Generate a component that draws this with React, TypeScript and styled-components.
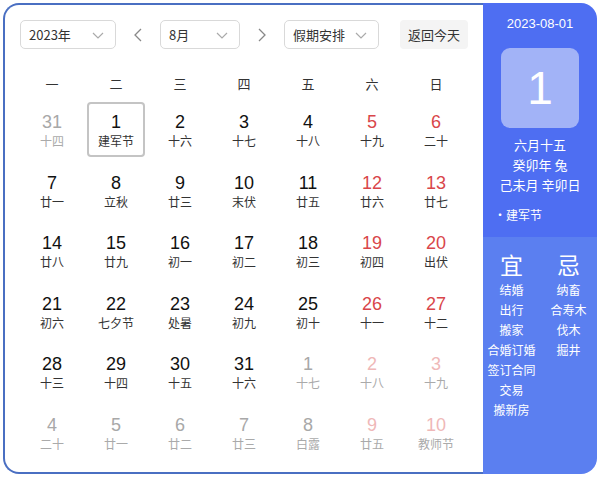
import styled, { createGlobalStyle } from 'styled-components';

const GlobalStyle = createGlobalStyle`
  html, body {
    margin: 0;
    padding: 0;
    background: #fff;
    font-family: "Liberation Sans", "Noto Sans CJK SC", sans-serif;
  }
`;

type Day = {
  num: number;
  lunar: string;
  other?: boolean;
  weekend?: boolean;
  selected?: boolean;
};

const raw: [number, string, boolean?][] = [
  [31, '十四', true], [1, '建军节'], [2, '十六'], [3, '十七'], [4, '十八'], [5, '十九'], [6, '二十'],
  [7, '廿一'], [8, '立秋'], [9, '廿三'], [10, '末伏'], [11, '廿五'], [12, '廿六'], [13, '廿七'],
  [14, '廿八'], [15, '廿九'], [16, '初一'], [17, '初二'], [18, '初三'], [19, '初四'], [20, '出伏'],
  [21, '初六'], [22, '七夕节'], [23, '处暑'], [24, '初九'], [25, '初十'], [26, '十一'], [27, '十二'],
  [28, '十三'], [29, '十四'], [30, '十五'], [31, '十六'], [1, '十七', true], [2, '十八', true], [3, '十九', true],
  [4, '二十', true], [5, '廿一', true], [6, '廿二', true], [7, '廿三', true], [8, '白露', true], [9, '廿五', true], [10, '教师节', true],
];

const days: Day[] = raw.map(([num, lunar, other], i) => ({
  num,
  lunar,
  other: !!other,
  weekend: i % 7 >= 5,
  selected: i === 1,
}));

const weekdays = ['一', '二', '三', '四', '五', '六', '日'];
const good = ['结婚', '出行', '搬家', '合婚订婚', '签订合同', '交易', '搬新房'];
const bad = ['纳畜', '合寿木', '伐木', '掘井'];

const Frame = styled.div`
  display: flex;
  margin: 3px 0 0 3px;
  width: 594px;
  height: 471px;
`;

const Main = styled.div`
  flex: 1;
  box-sizing: border-box;
  border: 2px solid #4a6fc2;
  border-right: none;
  border-radius: 16px 0 0 16px;
  padding: 15px 0 0 15px;
  background: #fff;
`;

const Toolbar = styled.div`
  display: flex;
  align-items: center;
  height: 29px;
`;

const Select = styled.div<{ $w: number }>`
  box-sizing: border-box;
  width: ${(p) => p.$w}px;
  height: 29px;
  border: 1px solid #d9d9d9;
  border-radius: 5px;
  display: flex;
  align-items: center;
  justify-content: space-between;
  padding: 0 10px 0 8px;
  font-size: 13px;
  color: #333;
  font-family: "Noto Sans CJK SC", sans-serif;
`;

const Arrow = styled.div`
  width: 44px;
  display: flex;
  justify-content: center;
  align-items: center;
  color: #888;
`;

const TodayButton = styled.div`
  margin-left: 21px;
  height: 29px;
  width: 68px;
  border-radius: 4px;
  background: #f4f4f4;
  font-size: 13px;
  color: #333;
  display: flex;
  align-items: center;
  justify-content: center;
  font-family: "Noto Sans CJK SC", sans-serif;
`;

const Grid = styled.div`
  display: grid;
  grid-template-columns: repeat(7, 64px);
  margin-top: 18px;
`;

const WeekHead = styled.div`
  height: 32px;
  display: flex;
  align-items: center;
  justify-content: center;
  font-size: 13px;
  color: #333;
  font-family: "Noto Sans CJK SC", sans-serif;
`;

const Cell = styled.div`
  height: 60.5px;
  display: flex;
  align-items: center;
  justify-content: center;
`;

const DayBox = styled.div<{ $selected?: boolean }>`
  box-sizing: border-box;
  width: 58px;
  height: 55px;
  padding-top: 3px;
  border-radius: 4px;
  border: 2px solid ${(p) => (p.$selected ? '#c4c4c4' : 'transparent')};
  display: flex;
  flex-direction: column;
  align-items: center;
  justify-content: center;
`;

const numColor = (d: Day) => {
  if (d.other) return d.weekend ? '#efb8b8' : '#a8a8a8';
  return d.weekend ? '#d9464a' : '#111';
};

const Num = styled.div<{ $color: string }>`
  font-size: 18px;
  line-height: 20px;
  color: ${(p) => p.$color};
`;

const Lunar = styled.div<{ $other?: boolean }>`
  font-size: 12px;
  line-height: 17px;
  color: ${(p) => (p.$other ? '#aaa' : '#333')};
  font-family: "Noto Sans CJK SC", sans-serif;
`;

const Side = styled.div`
  width: 114px;
  border-radius: 0 16px 16px 0;
  overflow: hidden;
  display: flex;
  flex-direction: column;
  color: #fff;
  font-family: "Noto Sans CJK SC", sans-serif;
`;

const SideTop = styled.div`
  height: 234px;
  background: #4e6ef2;
  display: flex;
  flex-direction: column;
  align-items: center;
`;

const SideDate = styled.div`
  margin-top: 12px;
  font-size: 13px;
  line-height: 18px;
  font-family: "Liberation Sans", sans-serif;
`;

const BigDay = styled.div`
  margin-top: 15px;
  width: 78px;
  height: 80px;
  border-radius: 9px;
  background: #a2b3f7;
  display: flex;
  align-items: center;
  justify-content: center;
  font-size: 46px;
  font-family: "Liberation Sans", sans-serif;
`;

const InfoLine = styled.div`
  font-size: 13px;
  line-height: 20px;
`;

const Info = styled.div`
  margin-top: 7px;
  display: flex;
  flex-direction: column;
  align-items: center;
`;

const Festival = styled.div`
  align-self: flex-start;
  margin: 11px 0 0 11px;
  font-size: 12px;
  line-height: 18px;
`;

const SideBottom = styled.div`
  flex: 1;
  background: #5b7ff0;
  display: flex;
  padding-top: 12px;
`;

const Column = styled.div`
  flex: 1;
  display: flex;
  flex-direction: column;
  align-items: center;
`;

const ColHead = styled.div`
  font-size: 23px;
  line-height: 30px;
  margin-bottom: 1px;
`;

const Item = styled.div`
  font-size: 12px;
  line-height: 20px;
  white-space: nowrap;
`;

const Chevron = ({ dir }: { dir: 'down' | 'left' | 'right' }) => {
  if (dir === 'down') {
    return (
      <svg width="14" height="14" viewBox="0 0 14 14">
        <path d="M2 5 L7 10 L12 5" fill="none" stroke="#aaa" strokeWidth="1.2" />
      </svg>
    );
  }
  const d = dir === 'left' ? 'M10 2 L4 8 L10 14' : 'M4 2 L10 8 L4 14';
  return (
    <svg width="14" height="16" viewBox="0 0 14 16">
      <path d={d} fill="none" stroke="#888" strokeWidth="1.3" />
    </svg>
  );
};

export default function App() {
  return (
    <>
      <GlobalStyle />
      <Frame>
        <Main>
          <Toolbar>
            <Select $w={96}>
              <span>2023年</span>
              <Chevron dir="down" />
            </Select>
            <Arrow>
              <Chevron dir="left" />
            </Arrow>
            <Select $w={80}>
              <span>8月</span>
              <Chevron dir="down" />
            </Select>
            <Arrow>
              <Chevron dir="right" />
            </Arrow>
            <Select $w={95}>
              <span>假期安排</span>
              <Chevron dir="down" />
            </Select>
            <TodayButton>返回今天</TodayButton>
          </Toolbar>
          <Grid>
            {weekdays.map((w) => (
              <WeekHead key={w}>{w}</WeekHead>
            ))}
            {days.map((d, i) => (
              <Cell key={i}>
                <DayBox $selected={d.selected}>
                  <Num $color={numColor(d)}>{d.num}</Num>
                  <Lunar $other={d.other}>{d.lunar}</Lunar>
                </DayBox>
              </Cell>
            ))}
          </Grid>
        </Main>
        <Side>
          <SideTop>
            <SideDate>2023-08-01</SideDate>
            <BigDay>1</BigDay>
            <Info>
              <InfoLine>六月十五</InfoLine>
              <InfoLine>癸卯年 兔</InfoLine>
              <InfoLine>己未月 辛卯日</InfoLine>
            </Info>
            <Festival>•建军节</Festival>
          </SideTop>
          <SideBottom>
            <Column>
              <ColHead>宜</ColHead>
              {good.map((g) => (
                <Item key={g}>{g}</Item>
              ))}
            </Column>
            <Column>
              <ColHead>忌</ColHead>
              {bad.map((b) => (
                <Item key={b}>{b}</Item>
              ))}
            </Column>
          </SideBottom>
        </Side>
      </Frame>
    </>
  );
}
